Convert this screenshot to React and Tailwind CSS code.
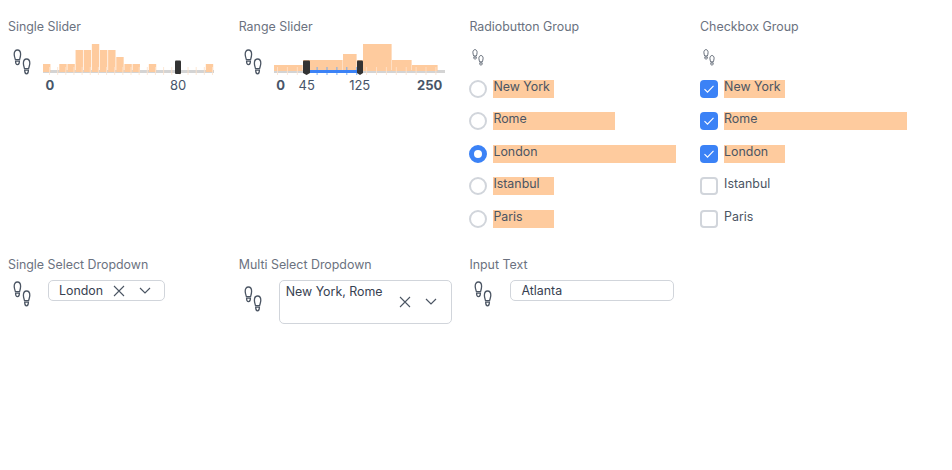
const font = { fontFamily: "Inter, 'Liberation Sans', sans-serif" };

function Steps({ small }) {
  return (
    <svg
      viewBox="0 0 18 26"
      className={small ? "h-[17px] w-[12px]" : "h-[26px] w-[18px]"}
      fill="none"
      stroke="#4b5563"
      strokeWidth="1.3"
    >
      <path d="M4.4 1C6.4 1 7.6 2.8 7.6 5.2C7.6 7.2 7 9.2 6.6 10.6L2.4 10.6C1.9 9 1.2 7.2 1.2 5.2C1.2 2.8 2.4 1 4.4 1Z" />
      <path d="M2.6 12.2L6.4 12.2C6.4 14.4 5.8 15.6 4.5 15.6C3.2 15.6 2.6 14.4 2.6 12.2Z" />
      <path d="M13.6 10C15.6 10 16.8 11.8 16.8 14.2C16.8 16.2 16 18 15.6 19.6L11.5 19.6C11.1 18 10.4 16.2 10.4 14.2C10.4 11.8 11.6 10 13.6 10Z" />
      <path d="M11.7 21.2L15.4 21.2C15.4 23.4 14.8 24.8 13.5 24.8C12.2 24.8 11.7 23.4 11.7 21.2Z" />
    </svg>
  );
}

function Label({ children }) {
  return <div className="h-[18px] text-[12.4px] leading-[18px] text-[#6b7280]">{children}</div>;
}

const singleBars = [
  [0, 8], [2, 8], [3, 8], [4, 22], [5, 22], [6, 28], [7, 22], [8, 22], [9, 15], [10, 8], [11, 8], [13, 8], [20, 8],
];

function SingleChart() {
  const ticks = Array.from({ length: 21 }, (_, i) => 6 + i * 8.15);
  return (
    <svg width="172" height="32" viewBox="0 0 172 32" className="block">
      <rect x="0" y="26" width="171" height="3" fill="#d4d4d4" />
      {singleBars.map(([k, h]) => (
        <rect key={k} x={k * 8.14} y={28 - h} width="7.4" height={h} fill="#fecb9e" />
      ))}
      {ticks.map((x) => (
        <rect key={x} x={x} y="23" width="1" height="8" fill="#fde2cc" opacity="0.8" />
      ))}
      <path d="M132 17.5a1 1 0 0 1 1-1h4a1 1 0 0 1 1 1V29a1 1 0 0 1-1 1h-4a1 1 0 0 1-1-1Z" fill="#333" />
    </svg>
  );
}

const rangeBars = [
  [0, 29, 65], [29, 40, 60], [69, 14, 54], [83, 6, 60], [89, 29, 44], [118, 20, 60], [138, 26, 65],
];

function RangeChart() {
  const ticks = Array.from({ length: 17 }, (_, i) => 3 + i * 9.9);
  return (
    <svg width="172" height="32" viewBox="0 0 172 32" className="block">
      <rect x="0" y="26" width="171" height="3" fill="#d4d4d4" />
      {rangeBars.map(([x, w, top]) => (
        <rect key={x} x={x} y={top - 44} width={w - 0.4} height={72 - top - 1} fill="#fecb9e" />
      ))}
      {ticks.map((x) => {
        const on = x > 33 && x < 86;
        return <rect key={x} x={x} y="23" width="1" height="8" fill={on ? "#60a5fa" : "#fde2cc"} opacity="0.85" />;
      })}
      <rect x="33" y="26" width="53" height="3" fill="#3b82f6" />
      <path d="M29 17.5a1 1 0 0 1 1-1h5a1 1 0 0 1 1 1V29l-3.5 2L29 29Z" fill="#333" />
      <path d="M83 17.5a1 1 0 0 1 1-1h4a1 1 0 0 1 1 1V29l-3 2-3-2Z" fill="#333" />
    </svg>
  );
}

function Mark({ label, center, bold }) {
  return (
    <span
      className={`absolute top-0 -translate-x-1/2 text-[13px] leading-[16px] text-[#475569] ${bold ? "font-bold" : ""}`}
      style={{ left: center }}
    >
      {label}
    </span>
  );
}

function Row({ label, width, children }) {
  return (
    <div className="mb-[14.4px] flex h-[18px] items-start gap-[6px]">
      {children}
      <span
        className={`h-[18px] text-[12.4px] leading-[14px] text-[#4b5563] ${width ? "bg-[#fecb9e]" : ""}`}
        style={width ? { width } : undefined}
      >
        {label}
      </span>
    </div>
  );
}

function Radio({ on }) {
  return on ? (
    <span className="h-[18px] w-[18px] rounded-full border-[5px] border-[#3b82f6] bg-white" />
  ) : (
    <span className="h-[18px] w-[18px] rounded-full border-2 border-[#d1d5db] bg-white" />
  );
}

function Check({ on }) {
  return on ? (
    <span className="flex h-[18px] w-[18px] items-center justify-center rounded-[4px] bg-[#3b82f6]">
      <svg width="12" height="10" viewBox="0 0 12 10" fill="none" stroke="#fff" strokeWidth="1.1">
        <path d="M1.5 5.2L4.5 8.2L10.5 1.8" />
      </svg>
    </span>
  ) : (
    <span className="h-[18px] w-[18px] rounded-[4px] border-2 border-[#d1d5db] bg-white" />
  );
}

function Clear() {
  return (
    <svg width="12" height="12" viewBox="0 0 12 12" fill="none" stroke="#4b5563" strokeWidth="1.1">
      <path d="M1 1L11 11M11 1L1 11" />
    </svg>
  );
}

function Chevron() {
  return (
    <svg width="12" height="7" viewBox="0 0 12 7" fill="none" stroke="#4b5563" strokeWidth="1.2">
      <path d="M1 1L6 6L11 1" />
    </svg>
  );
}

const radios = [
  ["New York", 61], ["Rome", 122], ["London", 183], ["Istanbul", 61], ["Paris", 61],
];
const checks = [
  ["New York", 61, true], ["Rome", 183, true], ["London", 61, true], ["Istanbul", 0, false], ["Paris", 0, false],
];

export default function App() {
  return (
    <div className="h-[470px] w-[952px] overflow-hidden bg-white pl-2 pt-[18px]" style={font}>
      <div className="grid grid-cols-[repeat(4,230.7px)] grid-rows-[238px_auto]">
        <div>
          <Label>Single Slider</Label>
          <div className="mt-[12px] flex">
            <div className="w-[35px] pl-[5px] pt-[1px]"><Steps /></div>
            <div>
              <div className="-mt-[4px]"><SingleChart /></div>
              <div className="relative mt-[1px] h-4">
                <Mark label="0" center={7} bold />
                <Mark label="80" center={135} />
              </div>
            </div>
          </div>
        </div>

        <div>
          <Label>Range Slider</Label>
          <div className="mt-[12px] flex">
            <div className="w-[35px] pl-[5px] pt-[1px]"><Steps /></div>
            <div>
              <div className="-mt-[4px]"><RangeChart /></div>
              <div className="relative mt-[1px] h-4">
                <Mark label="0" center={7} bold />
                <Mark label="45" center={33} />
                <Mark label="125" center={86} />
                <Mark label="250" center={156} bold />
              </div>
            </div>
          </div>
        </div>

        <div>
          <Label>Radiobutton Group</Label>
          <div className="ml-[3px] mt-[13px]"><Steps small /></div>
          <div className="mt-[14px]">
            {radios.map(([name, w], i) => (
              <Row key={name} label={name} width={w}>
                <Radio on={i === 2} />
              </Row>
            ))}
          </div>
        </div>

        <div>
          <Label>Checkbox Group</Label>
          <div className="ml-[3px] mt-[13px]"><Steps small /></div>
          <div className="mt-[14px]">
            {checks.map(([name, w, on]) => (
              <Row key={name} label={name} width={w}>
                <Check on={on} />
              </Row>
            ))}
          </div>
        </div>

        <div>
          <Label>Single Select Dropdown</Label>
          <div className="mt-[6px] flex">
            <div className="w-[40px] pl-[5px] pt-[1px]"><Steps /></div>
            <div className="flex h-[21px] w-[117px] items-center rounded-[5px] border border-[#d1d5db] pl-[10px] text-[12.4px] text-[#374151]">
              <span className="w-[54px] pt-px">London</span>
              <Clear />
              <span className="ml-[14px]"><Chevron /></span>
            </div>
          </div>
        </div>

        <div>
          <Label>Multi Select Dropdown</Label>
          <div className="mt-[6px] flex">
            <div className="w-[40px] pl-[5px] pt-[6px]"><Steps /></div>
            <div className="relative h-[44px] w-[173px] rounded-[5px] border border-[#d1d5db] pl-[6px] pt-[2px] text-[12.4px] leading-[18px] text-[#374151]">
              New York, Rome
              <span className="absolute left-[119px] top-[15px]"><Clear /></span>
              <span className="absolute left-[145px] top-[17px]"><Chevron /></span>
            </div>
          </div>
        </div>

        <div>
          <Label>Input Text</Label>
          <div className="mt-[6px] flex">
            <div className="w-[41px] pl-[5px] pt-[1px]"><Steps /></div>
            <div className="flex h-[21px] w-[164px] items-center rounded-[5px] border border-[#d1d5db] pl-[10px] pt-px text-[12.4px] text-[#374151]">
              Atlanta
            </div>
          </div>
        </div>
      </div>
    </div>
  );
}
